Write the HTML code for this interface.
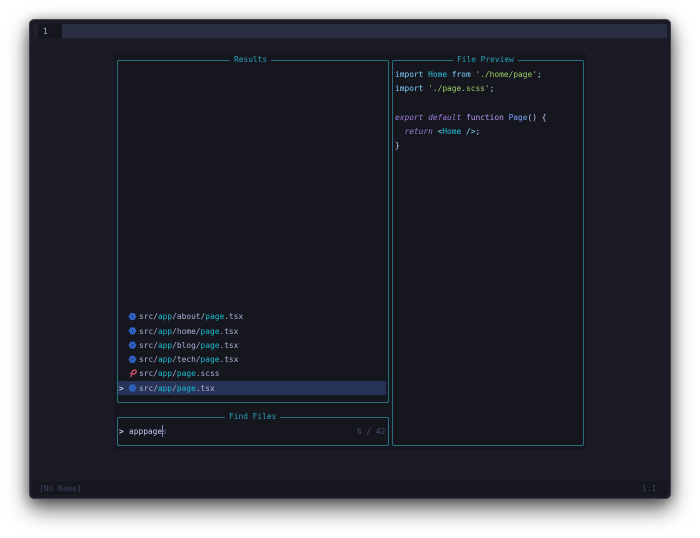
<!DOCTYPE html>
<html>
<head>
<meta charset="utf-8">
<style>
html,body{margin:0;padding:0;background:#fff;width:700px;height:538px;overflow:hidden}
*{box-sizing:border-box}
#win{position:absolute;left:29px;top:19px;width:642px;height:480px;background:#1a1b26;border-radius:5px;box-shadow:0 10px 22px rgba(0,0,0,.6),0 2px 12px rgba(0,0,0,.35);border:1px solid #3c3c42;border-top-color:#44444a;overflow:hidden}
.a{position:absolute}
.t{position:absolute;font-family:"DejaVu Sans Mono","Liberation Mono",monospace;font-size:7.86px;line-height:14px;white-space:pre;color:#c0caf5;filter:blur(.25px)}
.box{position:absolute;border:1px solid #27707f;border-radius:2px;background:#16161e}
.title{position:absolute;font-family:"DejaVu Sans Mono","Liberation Mono",monospace;font-size:7.86px;line-height:10px;color:#27a1b9;background:#16161e;white-space:pre;padding:0 4px;filter:blur(.2px)}
.c{color:#1abcd0}
.g{color:#a9b1d6}
.kw{color:#7dcfff}
.bl{color:#2ac3de}
.st{color:#9ece6a}
.pu{color:#9d7cd8;font-style:italic}
.fn{color:#bb9af7}
.pg{color:#7aa2f7}
.p{color:#89ddff}
.w{color:#c0caf5}
</style>
</head>
<body>
<div id="win"></div>
<div class="a" style="left:33px;top:24px;width:634px;height:14px;background:#292e42"></div>
<div class="a" style="left:33px;top:24px;width:5px;height:14px;background:#1f2029"></div>
<div class="a" style="left:38px;top:24px;width:24px;height:14px;background:#16161e"></div>
<div class="t" style="left:43px;top:25px;color:#a9b1d6">1</div>

<div class="a" style="left:33px;top:481px;width:634px;height:14px;background:#16161e"></div>
<div class="t" style="left:39px;top:482px;color:#3b4261">[No Name]</div>
<div class="t" style="left:642px;top:482px;color:#3b4261">1:1</div>

<div class="a" style="left:114px;top:53px;width:473px;height:397px;background:#16161e"></div>

<div class="box" style="left:117px;top:60px;width:272px;height:343px"></div>
<div class="title" style="left:230px;top:55px">Results</div>

<div class="box" style="left:392px;top:60px;width:192px;height:386px"></div>
<div class="title" style="left:453px;top:55px">File Preview</div>

<div class="box" style="left:117px;top:417px;width:272px;height:29px"></div>
<div class="title" style="left:225px;top:412px">Find Files</div>

<div class="t" style="left:395px;top:68px"><span class="kw">import</span> <span class="bl">Home</span> <span class="kw">from</span> <span class="st">'./home/page'</span><span class="p">;</span></div>
<div class="t" style="left:395px;top:82px"><span class="kw">import</span> <span class="st">'./page.scss'</span><span class="p">;</span></div>
<div class="t" style="left:395px;top:111px"><span class="pu">export</span> <span class="pu">default</span> <span class="fn">function</span> <span class="pg">Page</span><span class="w">()</span> <span class="w">{</span></div>
<div class="t" style="left:395px;top:125px">  <span class="pu">return</span> <span class="p">&lt;</span><span class="bl">Home</span> <span class="p">/&gt;</span><span class="w">;</span></div>
<div class="t" style="left:395px;top:139px"><span class="w">}</span></div>

<div class="a" style="left:118px;top:381px;width:268px;height:14px;background:#283457"></div>

<svg class="a" style="left:127px;top:311px" width="10" height="84" viewBox="0 0 10 84">
<g fill="none" stroke="#2f62c4" stroke-width="1.4">
<g id="r"><ellipse cx="5.500" cy="5.500" rx="3.200" ry="1.300"/><ellipse cx="5.500" cy="5.500" rx="3.200" ry="1.300" transform="rotate(60 5.500 5.500)"/><ellipse cx="5.500" cy="5.500" rx="3.200" ry="1.300" transform="rotate(120 5.500 5.500)"/></g>
<use href="#r" y="14.3"/>
<use href="#r" y="28.6"/>
<use href="#r" y="42.9"/>
<use href="#r" y="71.5"/>
</g>
<path d="M4 66 C4 63 5 59 8 59 C10 59 9.500 62.500 7 63 C5.500 63.300 4 62.500 3.500 62" fill="none" stroke="#e0556e" stroke-width="1.2"/>
</svg>

<div class="t" style="left:139px;top:310px"><span class="g">src/</span><span class="c">app</span><span class="g">/about/</span><span class="c">page</span><span class="g">.tsx</span></div>
<div class="t" style="left:139px;top:325px"><span class="g">src/</span><span class="c">app</span><span class="g">/home/</span><span class="c">page</span><span class="g">.tsx</span></div>
<div class="t" style="left:139px;top:339px"><span class="g">src/</span><span class="c">app</span><span class="g">/blog/</span><span class="c">page</span><span class="g">.tsx</span></div>
<div class="t" style="left:139px;top:353px"><span class="g">src/</span><span class="c">app</span><span class="g">/tech/</span><span class="c">page</span><span class="g">.tsx</span></div>
<div class="t" style="left:139px;top:367px"><span class="g">src/</span><span class="c">app</span><span class="g">/</span><span class="c">page</span><span class="g">.scss</span></div>
<div class="t" style="left:139px;top:382px"><span class="g">src/</span><span class="c">app</span><span class="g">/</span><span class="c">page</span><span class="g">.tsx</span></div>
<div class="t" style="left:119px;top:382px;color:#c0caf5;font-weight:bold">&gt;</div>

<div class="t" style="left:119px;top:425px;color:#c0caf5;font-weight:bold">&gt;</div>
<div class="t" style="left:129px;top:425px;color:#c0caf5">apppage<span style="color:#565f89">s</span></div>
<div class="a" style="left:162px;top:425px;width:1px;height:12px;background:#7a88b8"></div>
<div class="t" style="left:357px;top:425px;color:#4a5070">6 / 42</div>
</body>
</html>
